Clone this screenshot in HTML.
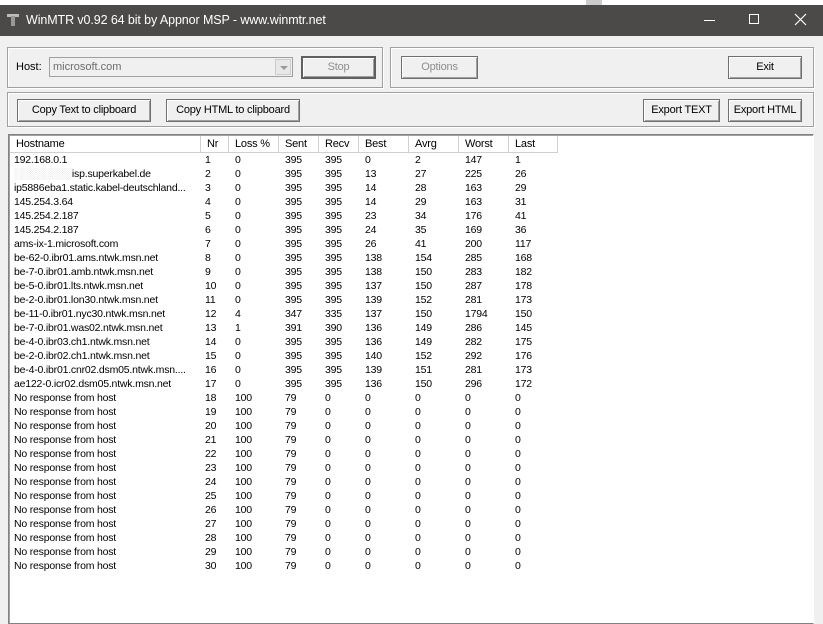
<!DOCTYPE html>
<html><head><meta charset="utf-8"><style>
*{margin:0;padding:0;box-sizing:border-box}
body{width:823px;height:607px;background:#f0f0f0;font-family:"Liberation Sans",sans-serif;font-size:11px;color:#000;position:relative;overflow:hidden}
.a{position:absolute}
.top{left:0;top:0;width:823px;height:5px;background:#fff}
.tb{left:0;top:5px;width:823px;height:31px;background:#4b4a48;color:#fff;font-size:12.5px}
.grp{border:1px solid #a0a0a0;box-shadow:inset 1px 1px 0 #fff,1px 1px 0 #fff}
.btn{border:1px solid #707070;background:#f0f0f0;box-shadow:inset 1px 1px 0 #fff,inset -1px -1px 0 #a0a0a0;text-align:center;line-height:21px;font-size:11px;letter-spacing:-0.2px}
.tbl{left:8px;top:134px;width:806px;height:490px;background:#fff;border:1px solid #828282;border-right-color:#fff;box-shadow:inset 1px 1px 0 #a0a0a0;font-size:10.5px;letter-spacing:-0.2px}
.hd{position:absolute;top:1px;height:17px;border-right:1px solid #d0d0d0;border-bottom:1px solid #d0d0d0;background:#fff;padding-left:6px;line-height:17px;font-size:11px}
.r{position:absolute;left:0;height:14px;line-height:14px;width:800px;white-space:nowrap}
.r span{position:absolute;top:0}
</style></head><body>
<div class="a top"></div>
<div class="a" style="left:586px;top:0;width:16px;height:5px;background:#ccc"></div>
<div class="a tb">
 <div class="a" style="left:7px;top:8px;width:12px;height:14px">
  <div class="a" style="left:0;top:1px;width:12px;height:3px;background:#bbb"></div>
  <div class="a" style="left:4px;top:3px;width:4px;height:10px;background:#999"></div>
 </div>
 <div class="a" style="left:26px;top:8px;letter-spacing:-0.1px">WinMTR v0.92 64 bit by Appnor MSP - www.winmtr.net</div>
 <div class="a" style="left:704px;top:15px;width:11px;height:1px;background:#fff"></div>
 <div class="a" style="left:749px;top:9px;width:10px;height:10px;border:1px solid #fff"></div>
 <svg class="a" style="left:794px;top:8px" width="13" height="13"><path d="M1 1L12 12M12 1L1 12" stroke="#fff" stroke-width="1.2"/></svg>
</div>
<div class="a grp" style="left:7px;top:47px;width:376px;height:41px"></div>
<div class="a grp" style="left:390px;top:47px;width:424px;height:41px"></div>
<div class="a grp" style="left:7px;top:92px;width:807px;height:35px"></div>
<div class="a" style="left:16px;top:61px;font-size:11px">Host:</div>
<div class="a" style="left:49px;top:57px;width:244px;height:20px;border:1px solid #a0a0a0;background:#f0f0f0;color:#6d6d6d;padding-left:3px;line-height:18px;font-size:11px">microsoft.com
 <div class="a" style="right:1px;top:1px;width:16px;height:16px;border:1px solid #ccc;background:#e8e8e8"><div class="a" style="left:4px;top:6px;border-left:4px solid transparent;border-right:4px solid transparent;border-top:4px solid #999"></div></div>
</div>
<div class="a btn" style="left:301px;top:56px;width:75px;height:23px;color:#8d8d8d;border:2px solid #606060;line-height:19px">Stop</div>
<div class="a btn" style="left:401px;top:56px;width:77px;height:23px;color:#8d8d8d">Options</div>
<div class="a btn" style="left:728px;top:56px;width:74px;height:23px">Exit</div>
<div class="a btn" style="left:17px;top:99px;width:134px;height:23px">Copy Text to clipboard</div>
<div class="a btn" style="left:166px;top:99px;width:134px;height:23px">Copy HTML to clipboard</div>
<div class="a btn" style="left:643px;top:99px;width:77px;height:23px">Export TEXT</div>
<div class="a btn" style="left:728px;top:99px;width:74px;height:23px">Export HTML</div>
<div class="a tbl">
 <div class="hd" style="left:1px;width:191px">Hostname</div>
 <div class="hd" style="left:192px;width:28px">Nr</div>
 <div class="hd" style="left:220px;width:50px">Loss %</div>
 <div class="hd" style="left:270px;width:40px">Sent</div>
 <div class="hd" style="left:310px;width:40px">Recv</div>
 <div class="hd" style="left:350px;width:50px">Best</div>
 <div class="hd" style="left:400px;width:50px">Avrg</div>
 <div class="hd" style="left:450px;width:50px">Worst</div>
 <div class="hd" style="left:500px;width:49px">Last</div>
 <div id="rows"></div>
</div>
<script>
var d=[["192.168.0.1",1,0,395,395,0,2,147,1],["<span style='color:#ccc;position:static'>&#9617;&#9617;&#9617;&#9617;&#9617;&#9617;&#9617;&#9617;</span>isp.superkabel.de",2,0,395,395,13,27,225,26],["ip5886eba1.static.kabel-deutschland...",3,0,395,395,14,28,163,29],["145.254.3.64",4,0,395,395,14,29,163,31],["145.254.2.187",5,0,395,395,23,34,176,41],["145.254.2.187",6,0,395,395,24,35,169,36],["ams-ix-1.microsoft.com",7,0,395,395,26,41,200,117],["be-62-0.ibr01.ams.ntwk.msn.net",8,0,395,395,138,154,285,168],["be-7-0.ibr01.amb.ntwk.msn.net",9,0,395,395,138,150,283,182],["be-5-0.ibr01.lts.ntwk.msn.net",10,0,395,395,137,150,287,178],["be-2-0.ibr01.lon30.ntwk.msn.net",11,0,395,395,139,152,281,173],["be-11-0.ibr01.nyc30.ntwk.msn.net",12,4,347,335,137,150,1794,150],["be-7-0.ibr01.was02.ntwk.msn.net",13,1,391,390,136,149,286,145],["be-4-0.ibr03.ch1.ntwk.msn.net",14,0,395,395,136,149,282,175],["be-2-0.ibr02.ch1.ntwk.msn.net",15,0,395,395,140,152,292,176],["be-4-0.ibr01.cnr02.dsm05.ntwk.msn....",16,0,395,395,139,151,281,173],["ae122-0.icr02.dsm05.ntwk.msn.net",17,0,395,395,136,150,296,172]];
for(var i=18;i<=30;i++)d.push(["No response from host",i,100,79,0,0,0,0,0]);
var x=[5,196,226,276,316,356,406,456,506],h="";
d.forEach(function(r,k){h+='<div class="r" style="top:'+(18+k*14)+'px">';r.forEach(function(v,j){h+='<span style="left:'+x[j]+'px">'+v+'</span>'});h+='</div>'});
document.getElementById('rows').innerHTML=h;
</script>
</body></html>
